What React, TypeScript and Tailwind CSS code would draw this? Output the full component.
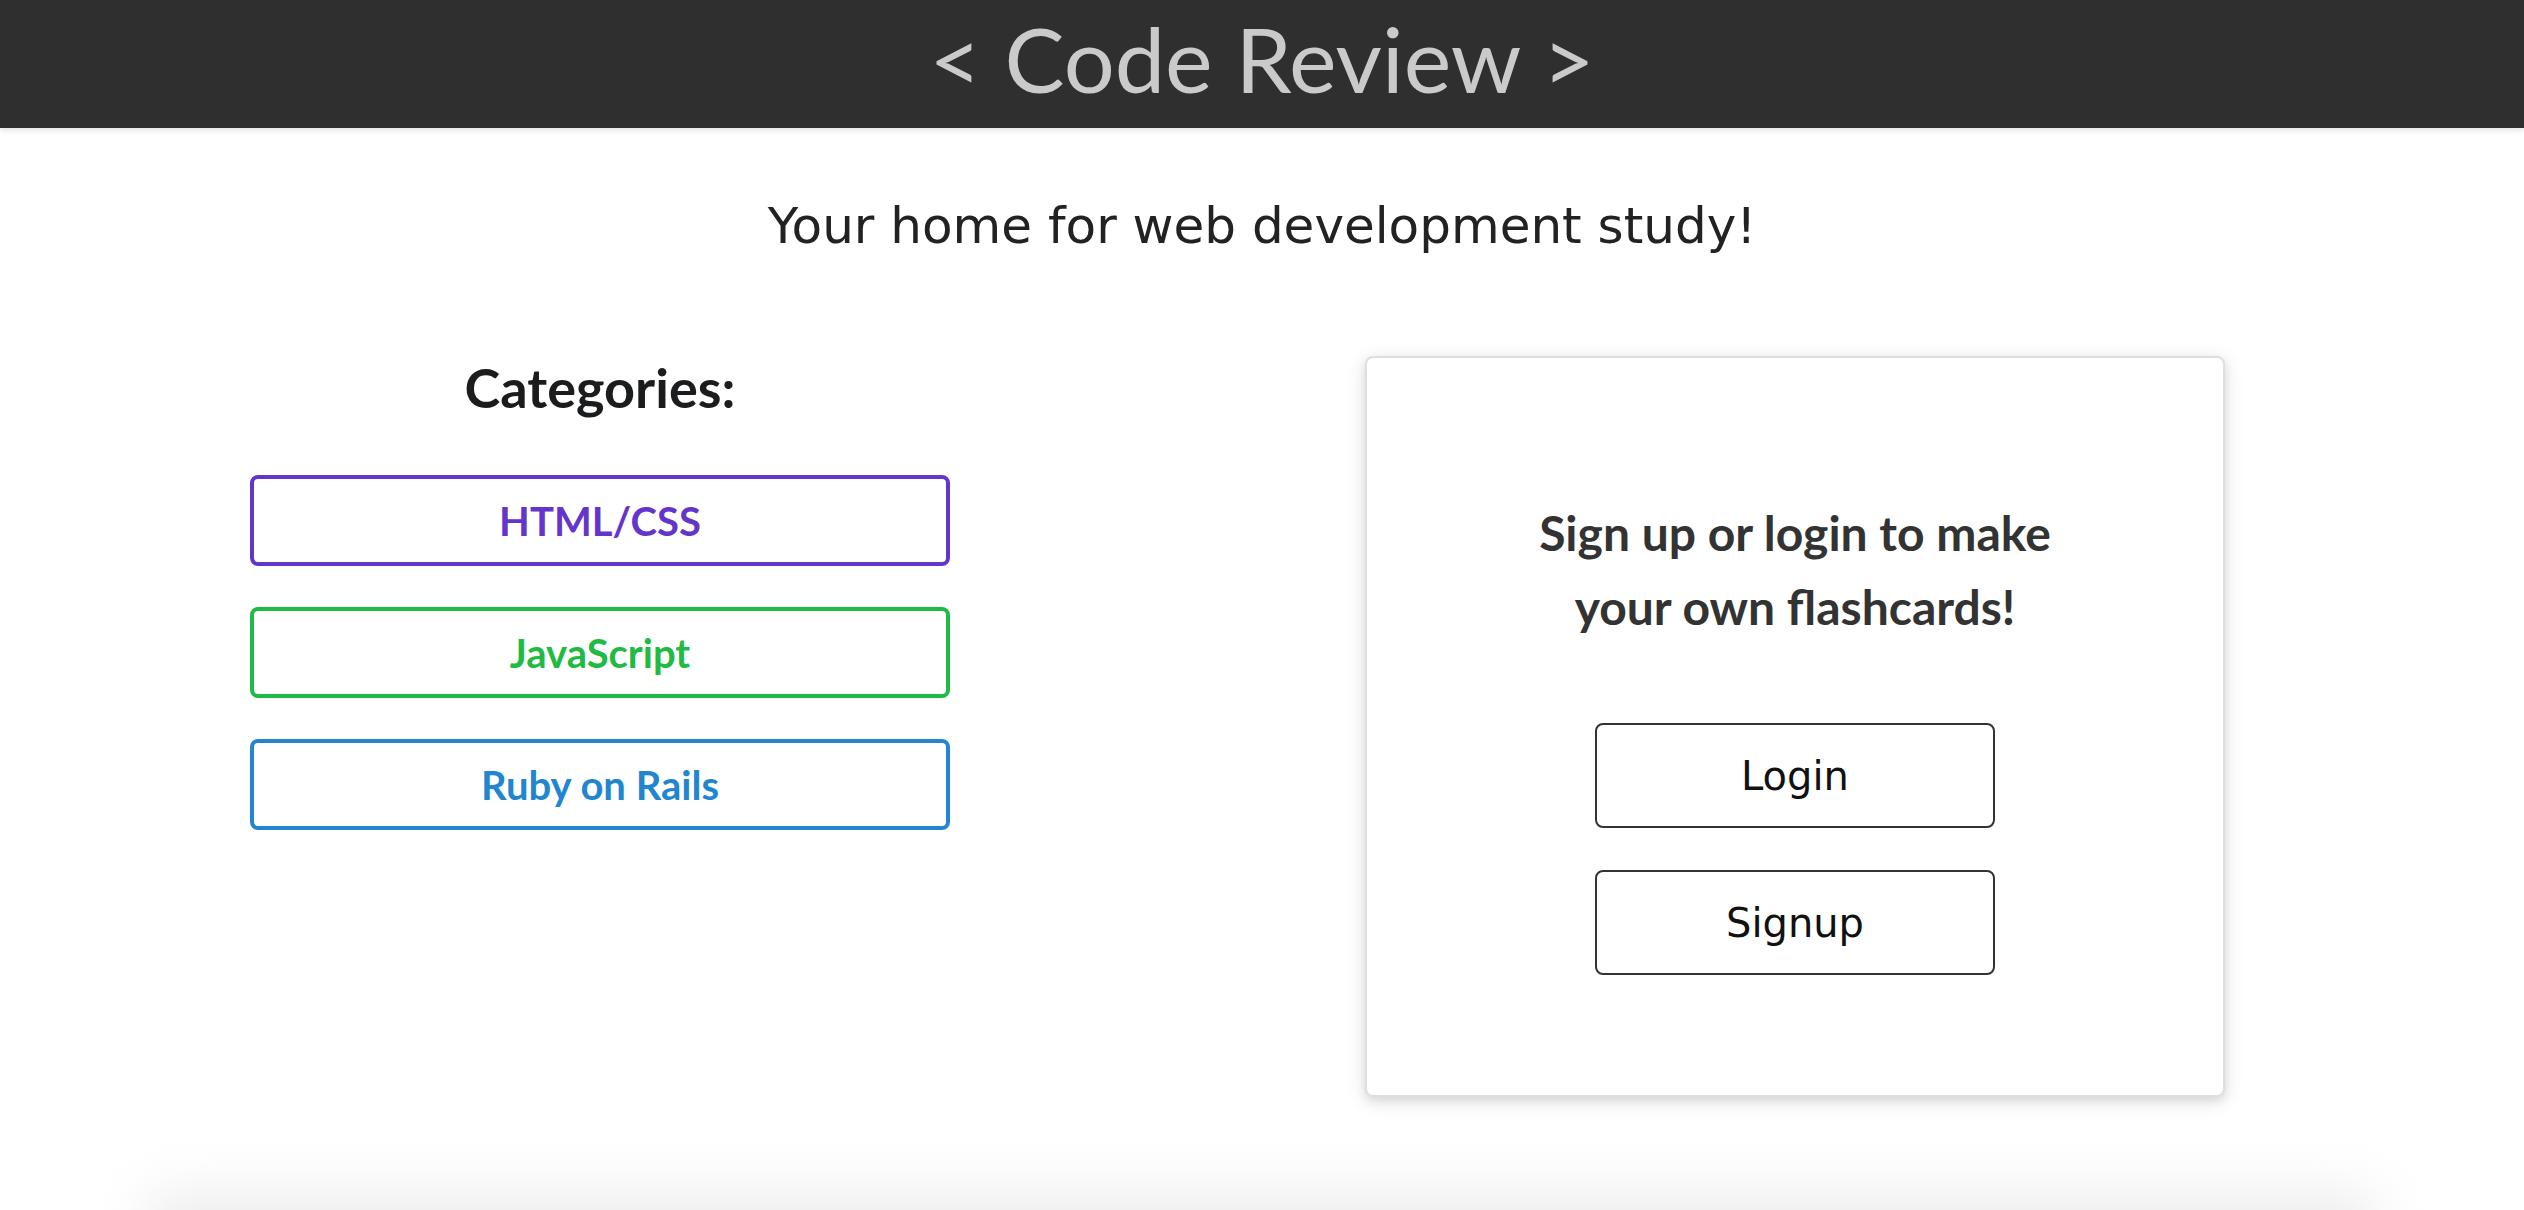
const categories = [
  { name: 'HTML/CSS', cls: 'border-[#6435c9] text-[#6435c9]' },
  { name: 'JavaScript', cls: 'border-[#21ba45] text-[#21ba45]' },
  { name: 'Ruby on Rails', cls: 'border-[#2185d0] text-[#2185d0]' },
]

export default function App() {
  return (
    <div className="flex h-screen flex-col overflow-hidden bg-white">
      <header className="relative z-10 flex h-[128px] flex-none items-center justify-center bg-[#2f2f2f] pb-[12px] shadow-[0_2px_6px_rgba(0,0,0,0.12)]">
        <h1 className="font-['Lato',sans-serif] text-[90px] leading-none text-[#cacaca]">
          &lt; Code Review &gt;
        </h1>
      </header>

      <main className="flex-1">
        <p className="mt-[68px] text-center font-['DejaVu_Sans',sans-serif] text-[50px] leading-[60px] text-[#222]">
          Your home for web development study!
        </p>

        <div className="mt-[100px] grid grid-cols-[700px_860px] gap-x-[415px] pl-[250px]">
          <section className="flex flex-col">
            <h2 className="text-center font-['Lato',sans-serif] text-[54px] font-bold leading-[64px] text-[#1b1c1d]">
              Categories:
            </h2>
            <ul role="list" className="mt-[55px] flex flex-col gap-[41px]">
              {categories.map((c) => (
                <li key={c.name}>
                  <button
                    className={`flex h-[91px] w-full items-center justify-center rounded-lg border-4 bg-white font-['Lato',sans-serif] text-[40px] font-bold ${c.cls}`}
                  >
                    {c.name}
                  </button>
                </li>
              ))}
            </ul>
          </section>

          <section className="flex h-[741px] flex-col items-center rounded-lg border-2 border-[#dedede] bg-white shadow-[0_4px_8px_rgba(34,36,38,0.1),0_4px_20px_rgba(34,36,38,0.12)]">
            <h3 className="mt-[138px] text-center font-['Lato',sans-serif] text-[48px] font-bold leading-[74px] text-[#333]">
              Sign up or login to make
              <br />
              your own flashcards!
            </h3>
            <button className="mt-[79px] flex h-[105px] w-[400px] items-center justify-center rounded-lg border-2 border-[#333] bg-white font-['DejaVu_Sans',sans-serif] text-[40px] text-[#111]">
              Login
            </button>
            <button className="mt-[42px] flex h-[105px] w-[400px] items-center justify-center rounded-lg border-2 border-[#333] bg-white font-['DejaVu_Sans',sans-serif] text-[40px] text-[#111]">
              Signup
            </button>
          </section>
        </div>
      </main>

      <div className="h-[70px] flex-none overflow-hidden">
        <div className="mx-[150px] mt-[55px] h-[80px] bg-[#ebebeb] blur-[28px]" />
      </div>
    </div>
  )
}
